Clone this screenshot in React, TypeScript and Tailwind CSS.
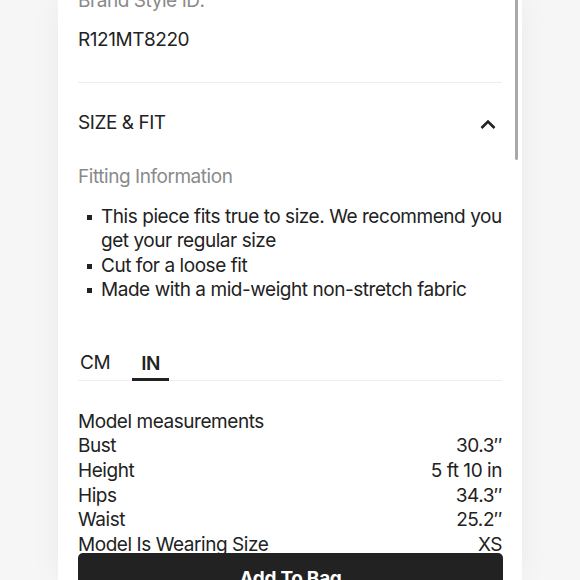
import React from 'react';

const bullets = [
  'This piece fits true to size. We recommend you get your regular size',
  'Cut for a loose fit',
  'Made with a mid-weight non-stretch fabric',
];

const measurements: [string, string][] = [
  ['Bust', '30.3″'],
  ['Height', '5 ft 10 in'],
  ['Hips', '34.3″'],
  ['Waist', '25.2″'],
  ['Model Is Wearing Size', 'XS'],
];

const App: React.FC = () => {
  return (
    <div
      className="h-[580px] w-[580px] overflow-hidden bg-[#f6f6f6] flex justify-center text-[#222]"
      style={{ fontFamily: 'Inter, "Noto Sans", sans-serif' }}
    >
      <div className="relative w-[464px] h-full bg-white shadow-[0_0_28px_rgba(0,0,0,0.05)] overflow-hidden">
        {/* scrollbar */}
        <div className="absolute right-[4px] top-0 w-[3px] h-[160px] rounded-b-full bg-[#a9a9a9]" />

        <div className="px-[20px] text-[19px] leading-[24.5px] tracking-[-0.45px]">
          {/* Brand style */}
          <div className="-mt-[11px] pb-[30px] border-b border-[#eeeeee]">
            <div className="text-[#8a8a8a]">Brand Style ID:</div>
            <div className="mt-[14px]">R121MT8220</div>
          </div>

          {/* Size & fit header */}
          <div className="h-[80px] flex items-center justify-between">
            <span>SIZE &amp; FIT</span>
            <svg width="16" height="10" viewBox="0 0 16 10" className="mr-[6px] mt-[2px]">
              <path d="M1.5 9 L8 2.5 L14.5 9" fill="none" stroke="#222" strokeWidth="2.6" />
            </svg>
          </div>

          <div className="mt-[2px] text-[#8a8a8a]">Fitting Information</div>

          <ul className="mt-[15px] pl-[9px]">
            {bullets.map((b) => (
              <li key={b} className="flex">
                <span className="w-[14px] shrink-0 flex items-start pt-[10px]">
                  <span className="w-[5px] h-[5px] bg-[#222]" />
                </span>
                <span>{b}</span>
              </li>
            ))}
          </ul>

          {/* unit tabs */}
          <div className="mt-[48px] flex items-end border-b border-[#eeeeee]">
            <button type="button" className="pl-[2px] pb-[5px] leading-[24px]">CM</button>
            <button
              type="button"
              className="ml-[22px] px-[9px] pb-[2px] leading-[24px] font-semibold border-b-[3px] border-[#222] -mb-px"
            >
              IN
            </button>
          </div>

          {/* measurements */}
          <div className="mt-[29px] leading-[24.7px]">
            <div>Model measurements</div>
            {measurements.map(([k, v]) => (
              <div key={k} className="flex justify-between">
                <span>{k}</span>
                <span>{v}</span>
              </div>
            ))}
          </div>
        </div>

        {/* sticky add to bag */}
        <div className="absolute left-[20px] right-[19px] top-[553px]">
          <button
            type="button"
            className="w-full h-[52px] rounded-[5px] bg-[#222] text-white text-[19px] font-bold tracking-[-0.3px]"
          >
            Add To Bag
          </button>
        </div>
      </div>
    </div>
  );
};

export default App;
